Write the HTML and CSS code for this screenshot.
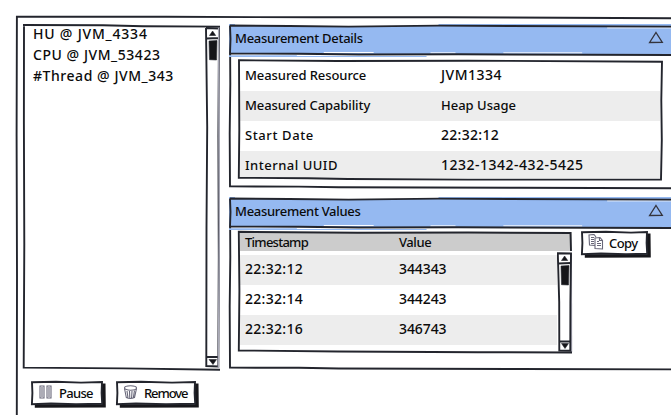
FILE: index.html
```html
<!DOCTYPE html>
<html lang="en">
<head>
<meta charset="utf-8">
<title>Measurements</title>
<link rel="stylesheet" href="styles.css">
</head>
<body>
<main class="window">
  <svg class="frame" viewBox="0 0 655 399"><path d="M.8 399L1 260 .6 120 .9 .6 150 .8 300 1.3 430 1.2 655 2.2"/></svg>
  <div class="left">
    <section class="list">
      <svg class="frame" viewBox="0 0 197 345"><path class="soft" d="M195.6 2L196.3 200 195.4 344"/><path d="M1 .5L.9 100 1.3 220 .7 343.6 100 344.4 197 345.8M0 1L80 1.3 120 2.2 197 2.6"/></svg>
      <ul class="items">
        <li class="t-hu">HU @ JVM_4334</li>
        <li class="t-cpu">CPU @ JVM_53423</li>
        <li class="t-thread">#Thread @ JVM_343</li>
      </ul>
      <svg class="scroll" viewBox="0 0 15 341"><path d="M1 1L14 1.5 13.4 110 13.8 230 13.3 339.5 1.3 339 1.5 200 2.2 100 1 1M1.5 11.5L14 11M1.5 330L14 330"/><path class="solid" d="M4 14l8-.5-.5 19.5-7-.3zM4.5 8.5L7.6 4l3.1 4.500zM4 332.500h7.500l-3.500 5z"/></svg>
    </section>
    <div class="actions">
      <button class="btn pause"><svg class="frame" viewBox="0 0 75 27"><path class="shade" d="M71 2.500h3.500l.3 24-71 .2v-3.500H71z"/><path class="box" d="M1 1.300L25 .8 50 1.600 71 1 70.600 12 71.200 22.800 45 23.200 20 22.500 .9 23.200 1.400 12z"/></svg><svg class="icon" viewBox="0 0 16 16"><path d="M2 2h4v12H2zM9 2h4v12H9zM4 3v10M11 3v10"/></svg><span class="t-pause">Pause</span></button>
      <button class="btn remove"><svg class="frame" viewBox="0 0 83 27"><path class="shade" d="M79 2.500h3.500l.3 24-79 .2v-3.500H79z"/><path class="box" d="M1 1.300L25 .8 56 1.600 79 1 78.600 12 79.200 22.800 50 23.200 20 22.500 .9 23.200 1.400 12z"/></svg><svg class="icon" viewBox="0 0 16 16"><ellipse cx="7.500" cy="4" rx="6" ry="2.200"/><path d="M1.500 4.500L3.300 13.500q4 2 8.200 0L13.500 4.500M4 7l1 7M6.500 7l.3 7.500M9 7l-.4 7.500M11.500 6.500l-1.200 7.500"/></svg><span class="t-remove">Remove</span></button>
    </div>
  </div>
  <div class="right">
    <section class="panel details">
      <svg class="frame" viewBox="0 0 443 165"><path d="M1 1L1.300 60 .7 110 1 162.600 70 162.800 110 163.500 290 164 443 164.400"/></svg>
      <header class="bar">
        <svg class="frame" viewBox="0 0 443 33"><path class="blue" d="M0 0H6V2H0zM0 31.300h68v1.700H0zM68 32h130v1H68zM210 0h233v2H210z"/><path class="gap" d="M95 28.500h50M202 28.900h25M275 28.900h79M379 3.800h64"/><path d="M1 1.500L60 2 120 2.600 210 1.600 443 2.600M1 1.500L1.500 15 1 29.500 70 29.800 130 30.600 230 30.300 443 31"/></svg>
        <h2 class="t-details">Measurement Details</h2>
        <svg class="tri" viewBox="0 0 16 13"><path d="M8 1.500L14.300 11.300 1.600 11.500z"/></svg>
      </header>
      <div class="table facts">
        <dl>
          <div class="row"><dt class="t-resource">Measured Resource</dt><dd class="t-jvm">JVM1334</dd></div>
          <div class="row alt"><dt class="t-cap">Measured Capability</dt><dd class="t-heap">Heap Usage</dd></div>
          <div class="row"><dt class="t-start">Start Date</dt><dd class="t-time">22:32:12</dd></div>
          <div class="row alt last"><dt class="t-internal">Internal UUID</dt><dd class="t-uuid">1232-1342-432-5425</dd></div>
        </dl>
        <svg class="frame" viewBox="0 0 425 121"><path d="M1 .3L100 1 230 .7 424 1.700 423.300 40 423.800 80 423 119.600 230 119.600 110 119 70 118.300 .8 117.800 1.300 70z"/></svg>
      </div>
    </section>
    <section class="panel values">
      <svg class="frame" viewBox="0 0 443 173"><path d="M1 1L1.300 60 .7 110 1 170.800 70 171 110 171.700 290 172.200 443 172.600"/></svg>
      <header class="bar">
        <svg class="frame" viewBox="0 0 443 33"><path class="blue" d="M0 0H6V2H0zM0 31.300h68v1.700H0zM68 32h130v1H68zM210 0h233v2H210z"/><path class="gap" d="M95 28.500h50M202 28.900h25M275 28.900h79M379 3.800h64"/><path d="M1 1.500L60 2 120 2.600 210 1.600 443 2.600M1 1.500L1.500 15 1 29.500 70 29.800 130 30.600 230 30.300 443 31"/></svg>
        <h2 class="t-values">Measurement Values</h2>
        <svg class="tri" viewBox="0 0 16 13"><path d="M8 1.500L14.300 11.300 1.600 11.500z"/></svg>
      </header>
      <div class="content">
        <div class="table samples">
          <div class="thead"><span class="t-stamp">Timestamp</span><span class="t-value">Value</span></div>
          <div class="row alt"><span class="t-time">22:32:12</span><span class="t-num">344343</span></div>
          <div class="row"><span class="t-time">22:32:14</span><span class="t-num">344243</span></div>
          <div class="row alt"><span class="t-time">22:32:16</span><span class="t-num">346743</span></div>
          <svg class="frame" viewBox="0 0 334 122"><path class="soft" d="M333.300 22L333.500 121"/><path d="M333 20L332.500 2 230 1.500 120 1.800 .8 .8 1.400 60 .8 119.500 100 120.500 240 121.200 334 121.500"/></svg>
          <svg class="scroll" viewBox="0 0 15 101"><path class="box" d="M.8 1.300L14 1.500 13.400 50 13.300 98.800 2.300 98.500 2.200 50z"/><path d="M1.500 11.500L14 11M2 89.500L14 89.500"/><path class="solid" d="M4 14l8-.5-.5 19.500-7-.3zM4.500 8.500L7.600 4l3.100 4.500zM4.500 91.500h7l-3.500 5z"/></svg>
        </div>
        <button class="btn copy"><svg class="frame" viewBox="0 0 70 27"><path class="shade" d="M66 2.500h3.500l.3 24-66 .2v-3.500H66z"/><path class="box" d="M1 1.300L25 .8 50 1.600 66 1 65.600 12 66.200 22.800 45 23.200 20 22.500 .9 23.200 1.400 12z"/></svg><svg class="icon" viewBox="0 0 16 16"><path d="M7 11.500L1.500 11 1 1l5-.5L8 3M3 3.500h3M3 5.500h3M3 7.500h3M3 9.500h3M7 4l5-.5 2.500 3v8.500l-7.500-.5zM11.500 3.500v3h3M9 7.500h2M9 9.500h4M9 11.500h4"/></svg><span class="t-copy">Copy</span></button>
      </div>
    </section>
  </div>
</main>
</body>
</html>
```
FILE: styles.css
```css
* { box-sizing: border-box; margin: 0; padding: 0; }
html, body { width: 671px; height: 415px; overflow: hidden; background: #fff; }
body {
  padding: 16px 0 0 16px;
  font: 500 13px/20px "Comic Sans MS", "Noto Sans", sans-serif;
  color: #0b0b0b;
}
svg { display: block; fill: none; stroke: #23252d; stroke-width: 1.9; }
.frame { position: absolute; inset: 0; width: 100%; height: 100%; overflow: visible; pointer-events: none; }
.soft { stroke: #aaaab8; stroke-width: 1.4; }
.solid { fill: #151519; stroke-width: .6; }
.shade { fill: #17171b; stroke: none; }
.box { fill: #fff; }
.blue { fill: #95b9f1; stroke: none; }
.gap { stroke: #fff; stroke-width: 1; }

.window { position: relative; display: flex; width: 655px; height: 399px; padding: 8px 0 0 7px; }
.left { width: 206px; flex: none; }
.right { flex: 1; min-width: 0; }

.list { position: relative; display: flex; justify-content: space-between; width: 197px; height: 345px; padding: 3px 0 0 10px; }
.items { list-style: none; margin-top: -4px; }
.items li { height: 21px; line-height: 21px; white-space: nowrap; font-size: 14px; }
.list .scroll { width: 15px; height: 341px; }

.actions { display: flex; gap: 10px; padding: 12px 0 0 8px; }
.btn { position: relative; display: flex; align-items: flex-start; height: 27px; border: 0; background: none; font: inherit; color: inherit; padding: 3px 0 0 7px; text-align: left; }
.btn .icon { position: relative; width: 16px; height: 16px; flex: none; stroke: #686779; stroke-width: 1.100; }
.btn span { position: relative; line-height: 18px; margin-left: 5px; }
.pause { width: 75px; }
.remove { width: 83px; }
.copy { width: 70px; }
.copy span { line-height: 19px; }

.panel { position: relative; }
.details { height: 165px; margin-bottom: 8px; }
.values { height: 173px; }
.bar { position: relative; display: flex; height: 33px; padding: 0 7px 0 6px; background: linear-gradient(#95b9f1, #95b9f1) 0 2px / 100% 28px no-repeat; }
.bar h2 { position: relative; flex: 1; font: inherit; line-height: 28px; white-space: nowrap; }
.bar .tri { position: relative; width: 16px; height: 13px; margin-top: 7px; stroke: #34343c; stroke-width: 1.300; }

.table { position: relative; }
.facts { width: 425px; height: 121px; margin: 3px 0 0 9px; padding: 1px 3px 0 2px; }
.row { display: grid; grid-template-columns: 196px 1fr; height: 30px; line-height: 28px; padding-left: 5px; white-space: nowrap; }
.alt { background: #ededed; }
.facts .last { height: 27px; }

.content { display: flex; align-items: flex-start; gap: 9px; padding: 1px 0 0 9px; }
.samples { width: 334px; height: 122px; padding: 1px 0 0 2px; }
.samples .row, .thead { display: grid; grid-template-columns: 154px 1fr; padding-left: 5px; }
.samples .row { width: 317px; }
.thead { height: 19px; line-height: 21px; margin-bottom: 4px; background: #ccc; }
.samples .scroll { position: absolute; right: 0; top: 21px; width: 15px; height: 101px; }

/* Lettering: tracking tuned per label */
.t-hu { letter-spacing: .8px; }
.t-cpu { letter-spacing: .55px; }
.t-thread { letter-spacing: .55px; }
.t-details { letter-spacing: -.27px; }
.t-values { letter-spacing: -.3px; }
.t-resource { letter-spacing: -.08px; }
.t-cap { letter-spacing: -.1px; }
.t-start { letter-spacing: .6px; }
.t-internal { letter-spacing: .5px; }
.t-jvm { font-size: 14px; letter-spacing: .5px; }
.t-heap { letter-spacing: 0; }
.t-time { font-size: 14px; letter-spacing: .3px; }
.t-uuid { font-size: 14px; letter-spacing: .5px; }
.t-num { font-size: 14px; letter-spacing: -.1px; }
.t-stamp { letter-spacing: -.75px; }
.t-value { letter-spacing: -.4px; }
.t-pause { letter-spacing: -.7px; }
.t-remove { letter-spacing: -1.1px; }
.t-copy { letter-spacing: -.6px; }
```
